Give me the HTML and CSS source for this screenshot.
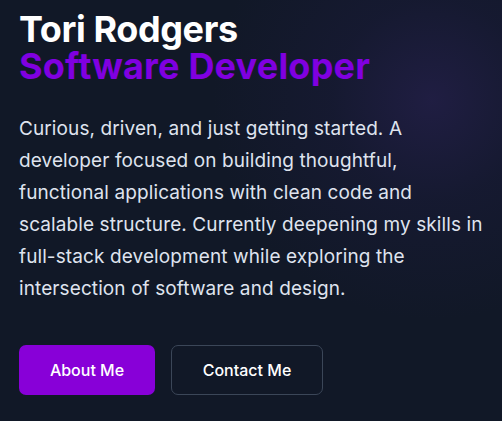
FILE: index.html
```html
<!DOCTYPE html>
<html lang="en">
<head>
<meta charset="utf-8">
<title>Tori Rodgers</title>
<link rel="stylesheet" href="styles.css">
</head>
<body>
<main class="hero">
  <h1 class="hero-title">
    <span class="hero-name">Tori Rodgers</span>
    <span class="hero-role">Software Developer</span>
  </h1>
  <p class="hero-text">Curious, driven, and just getting started. A developer focused on building thoughtful, functional applications with clean code and scalable structure. Currently deepening my skills in full-stack development while exploring the intersection of software and design.</p>
  <div class="hero-actions">
    <a class="btn btn-primary" href="#about">About Me</a>
    <a class="btn btn-outline" href="#contact">Contact Me</a>
  </div>
</main>
</body>
</html>
```
FILE: styles.css
```css
html, body {
  margin: 0;
  height: 100%;
}
body {
  background-color: #111827;
  background-image: radial-gradient(circle at 432px 100px, rgba(38, 32, 78, 0.7) 0, rgba(30, 28, 66, 0.35) 100px, rgba(17, 24, 39, 0) 220px);
  font-family: Inter, "Noto Sans", sans-serif;
  color: #e2e6f0;
  overflow: hidden;
}
.hero {
  padding: 11px 19px 0 19px;
}
.hero-title {
  margin: 0;
  display: flex;
  flex-direction: column;
  font-size: 36px;
  line-height: 37px;
  font-weight: 700;
}
.hero-name {
  color: #ffffff;
  letter-spacing: -0.4px;
}
.hero-role {
  color: #8000e0;
  letter-spacing: 0.2px;
}
.hero-text {
  margin: 28px 0 0 0;
  font-size: 19px;
  line-height: 32px;
  letter-spacing: 0.1px;
  color: #dfe3ee;
  max-width: 468px;
}
.hero-actions {
  margin-top: 40px;
  display: flex;
  gap: 16px;
}
.btn {
  display: flex;
  align-items: center;
  justify-content: center;
  height: 50px;
  box-sizing: border-box;
  border-radius: 7px;
  font-size: 16px;
  font-weight: 500;
  text-decoration: none;
  color: #ffffff;
}
.btn-primary {
  width: 136px;
  background: #8800d8;
}
.btn-outline {
  width: 152px;
  border: 1px solid #3b4658;
  background: transparent;
}
```
